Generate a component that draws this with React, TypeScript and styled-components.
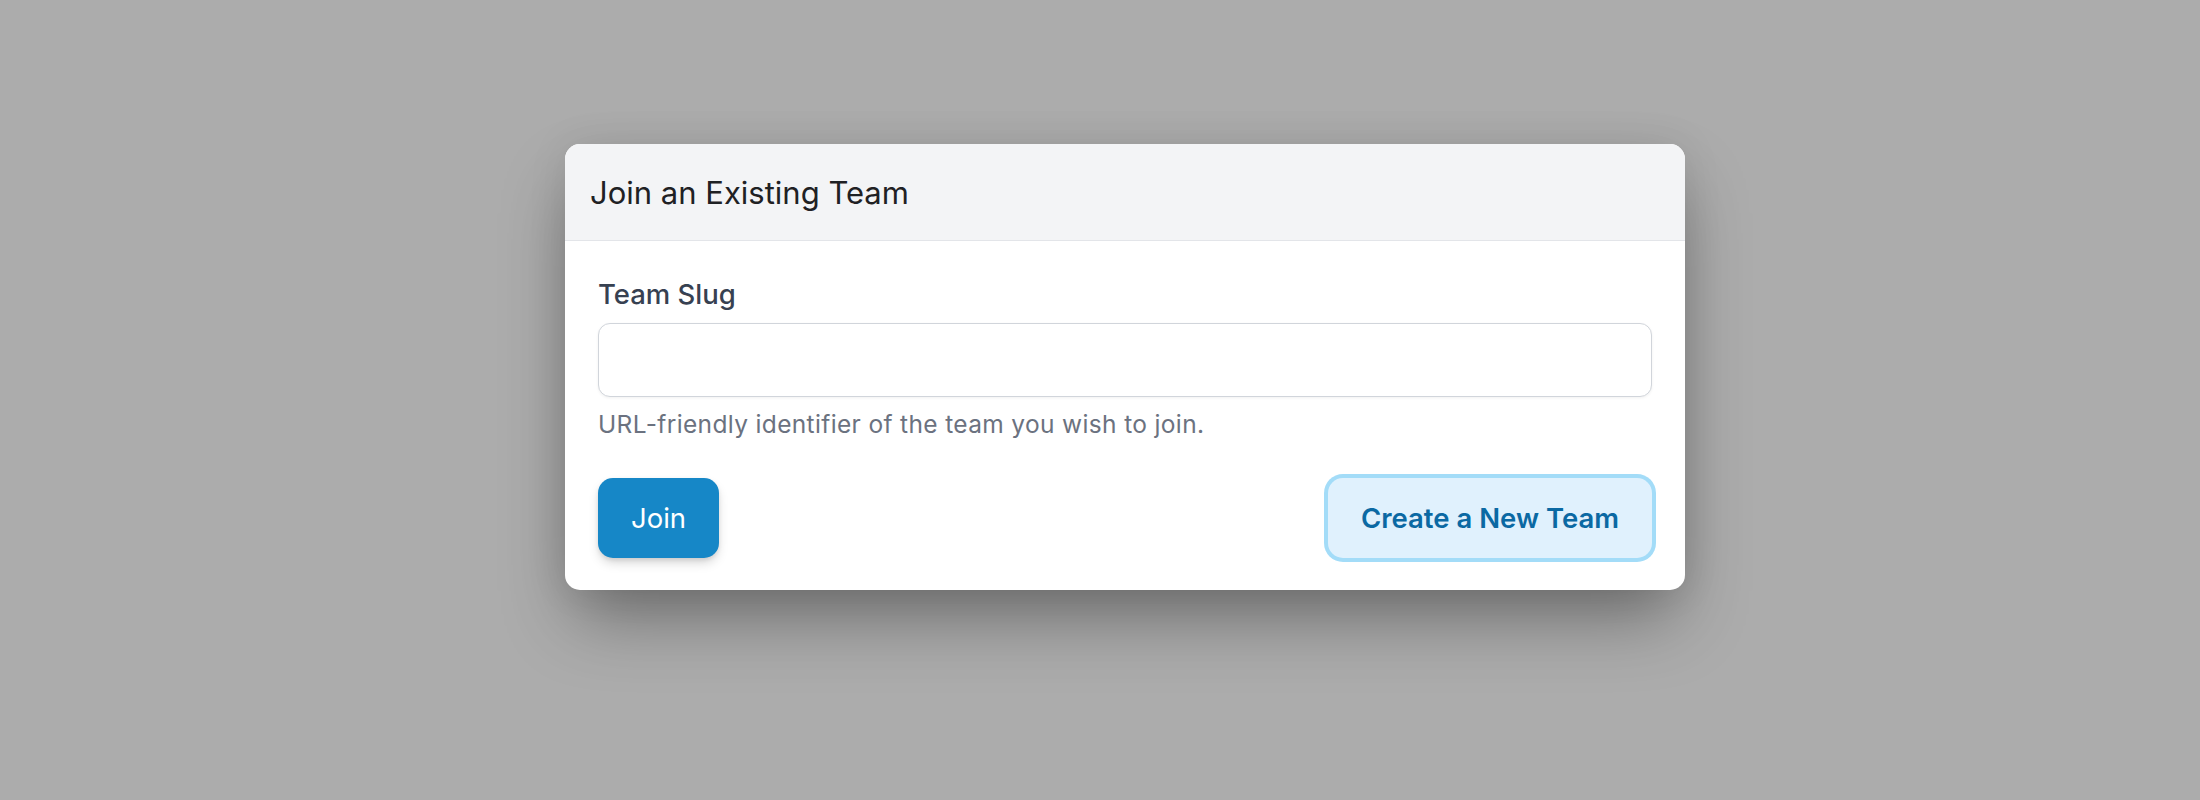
import React from "react";
import styled, { createGlobalStyle } from "styled-components";

const GlobalStyle = createGlobalStyle`
  html, body {
    margin: 0;
    padding: 0;
    background: #acacac;
  }
  body {
    font-family: Inter, "Noto Sans", sans-serif;
  }
  * { box-sizing: border-box; }
`;

const Backdrop = styled.div`
  width: 2200px;
  height: 800px;
  background: #acacac;
  display: flex;
  justify-content: center;
  align-items: flex-start;
  padding: 144px 0 0 50px;
  overflow: hidden;
`;

const Modal = styled.div`
  width: 1120px;
  background: #ffffff;
  border-radius: 15px;
  overflow: hidden;
  box-shadow: 0 35px 70px -10px rgba(0, 0, 0, 0.38), 0 0 40px rgba(0, 0, 0, 0.08);
`;

const Header = styled.div`
  height: 97px;
  background: #f3f4f6;
  border-bottom: 1.5px solid #e3e5e9;
  display: flex;
  align-items: center;
  padding: 2px 25px 0;
`;

const Title = styled.h2`
  margin: 0;
  font-size: 31px;
  font-weight: 400;
  color: #1f2124;
  line-height: 40px;
`;

const Body = styled.div`
  padding: 34px 33px 32px;
  display: flex;
  flex-direction: column;
`;

const Label = styled.label`
  font-size: 27.5px;
  font-weight: 500;
  color: #374151;
  line-height: 38px;
`;

const Input = styled.input`
  margin-top: 10px;
  height: 74px;
  width: 100%;
  border: 1.5px solid #d1d5db;
  border-radius: 12px;
  background: #fff;
  box-shadow: 0 1px 3px rgba(0, 0, 0, 0.06);
  font-family: inherit;
  font-size: 25px;
  padding: 0 18px;
  outline: none;
`;

const Help = styled.p`
  margin: 10px 0 0;
  font-size: 24.5px;
  letter-spacing: 0.35px;
  line-height: 34px;
  color: #6b7280;
`;

const Actions = styled.div`
  margin-top: 37px;
  display: flex;
  justify-content: space-between;
  align-items: center;
`;

const Button = styled.button<{ $variant: "primary" | "secondary" }>`
  height: 80px;
  padding: 0 33px;
  border-radius: 15px;
  border: none;
  font-family: inherit;
  font-size: 27.5px;
  cursor: pointer;
  ${(p) =>
    p.$variant === "primary"
      ? `
    background: #1687c7;
    color: #ffffff;
    font-weight: 400;
    box-shadow: 0 6px 12px -2px rgba(0, 0, 0, 0.18), 0 2px 4px rgba(0,0,0,0.08);
  `
      : `
    background: #e0f1fd;
    color: #0b69a3;
    font-weight: 600;
    box-shadow: 0 0 0 4px #a3dcf8;
  `}
`;

export default function App() {
  return (
    <>
      <GlobalStyle />
      <Backdrop>
        <Modal>
          <Header>
            <Title>Join an Existing Team</Title>
          </Header>
          <Body>
            <Label htmlFor="slug">Team Slug</Label>
            <Input id="slug" type="text" />
            <Help>URL-friendly identifier of the team you wish to join.</Help>
            <Actions>
              <Button $variant="primary">Join</Button>
              <Button $variant="secondary">Create a New Team</Button>
            </Actions>
          </Body>
        </Modal>
      </Backdrop>
    </>
  );
}
